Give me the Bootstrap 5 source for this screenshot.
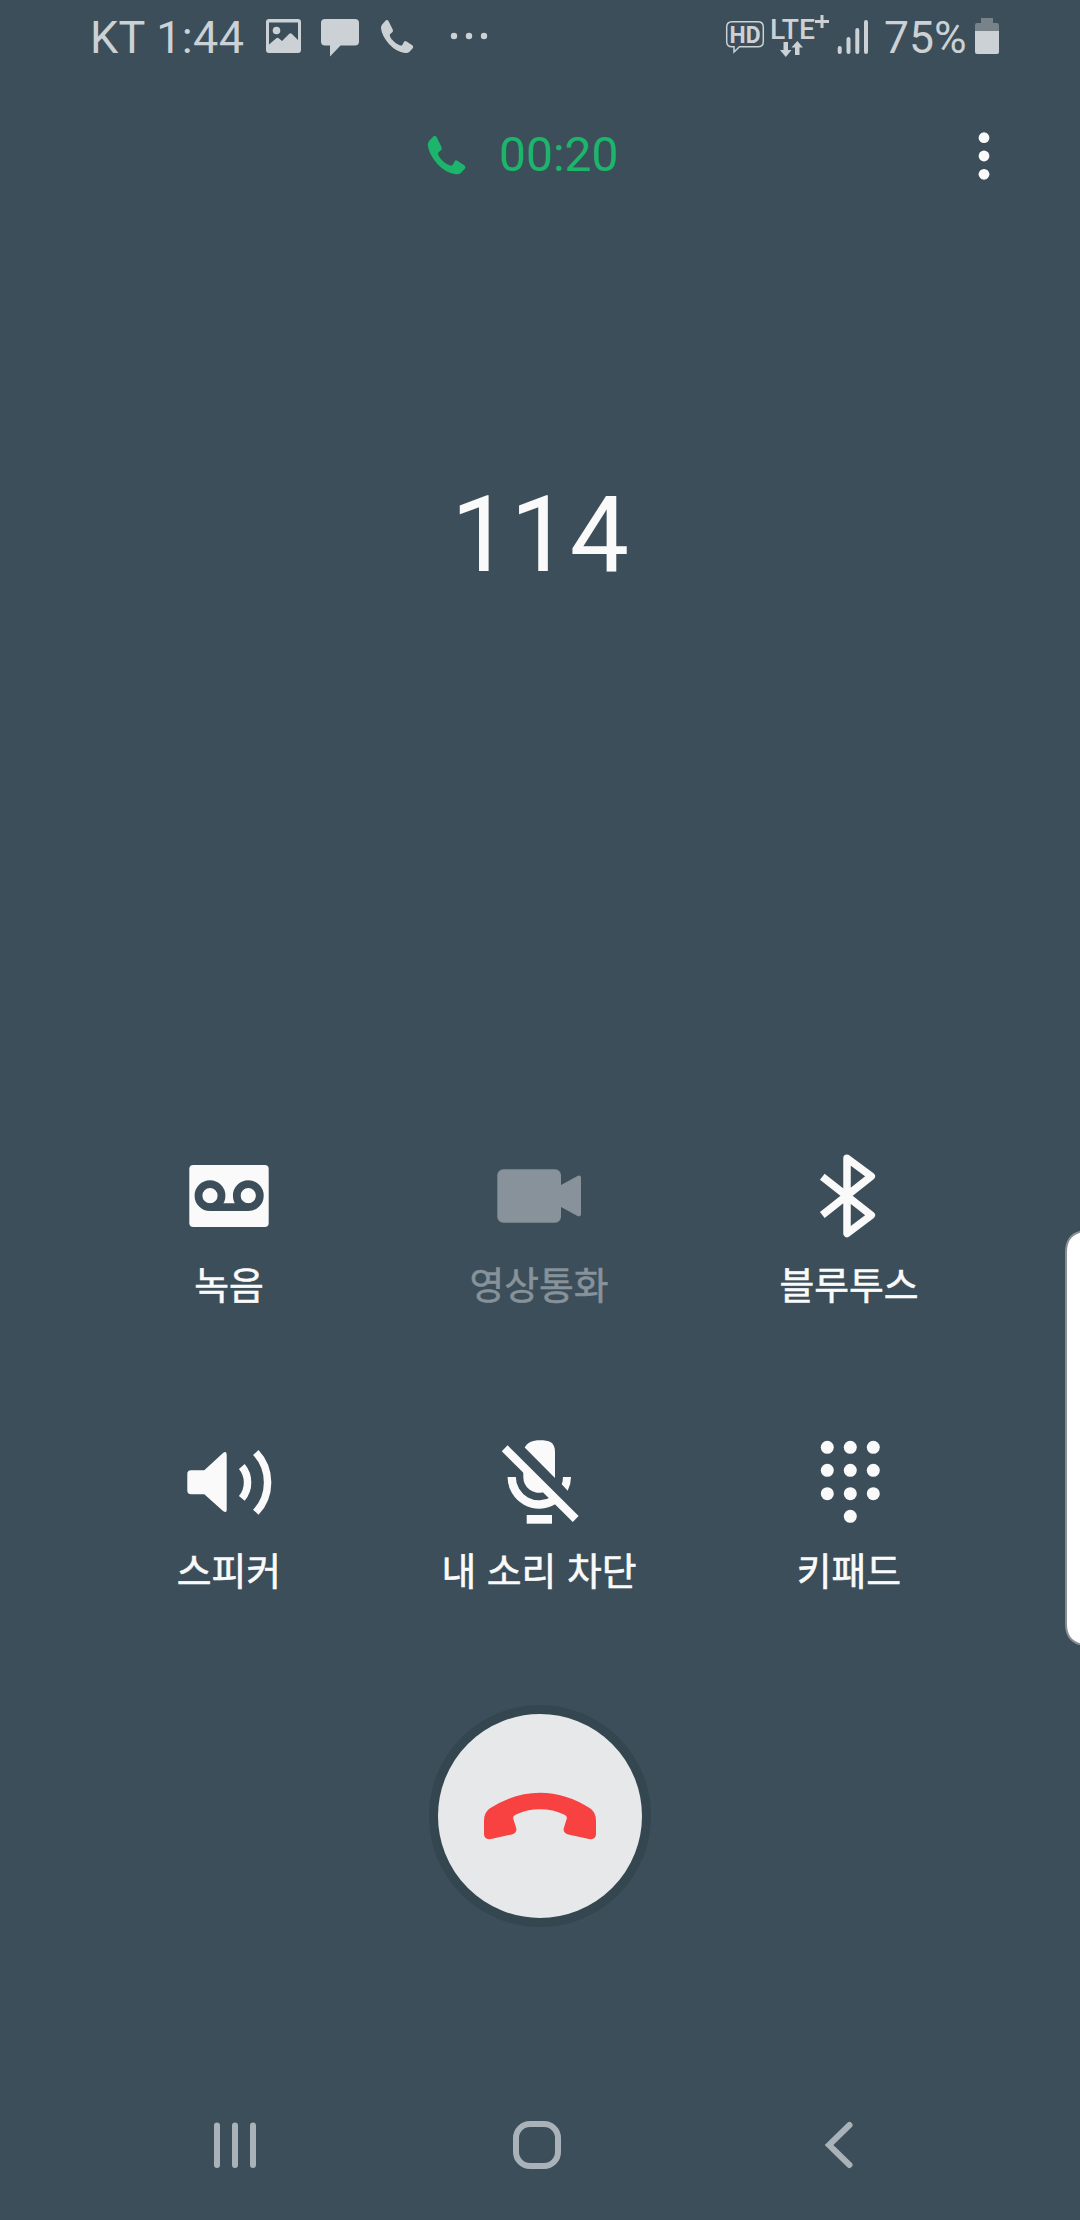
<!DOCTYPE html>
<html lang="ko">
<head>
<meta charset="utf-8">
<meta name="viewport" content="width=device-width, initial-scale=1">
<title>통화</title>
<link href="https://cdn.jsdelivr.net/npm/bootstrap@5.3.0/dist/css/bootstrap.min.css" rel="stylesheet">
<style>
  body { background: #3b4e59; color: #fafafa; font-family: Roboto, "Noto Sans CJK KR", sans-serif; }
  .screen { width: 1080px; height: 2220px; }
  svg { display: block; flex: none; overflow: visible; }
  .status-bar { height: 74px; padding: 0 81px 0 90px; color: #cbd1d4; font-size: 45px; line-height: 76px; }
  .carrier { width: 176px; white-space: pre; letter-spacing: .3px; }
  .percent { width: 93px; padding-left: 2px; font-size: 44.5px; }
  .call-bar { height: 164px; padding-top: 53px; }
  .timer { margin-left: 427px; gap: 32px; color: #1cb56b; font-size: 48px; line-height: 58px; height: 56px; }
  .menu-btn { margin-right: 86px; }
  .caller { height: 907px; padding-top: 235px; font-size: 105.5px; line-height: 124px; }
  .controls { padding: 0 76px 0 74px; }
  .control { height: 286px; }
  .control-name { font-family: "Noto Sans CJK KR", sans-serif; font-size: 37.8px; font-weight: 400; -webkit-text-stroke: .6px currentColor; line-height: 50px; margin-top: 13px; white-space: nowrap; }
  .off { color: #87929a; }
  .end-call { width: 222px; height: 222px; border: 9px solid #34464f; background: #e6e8ea; color: #f74241; margin-top: -12px; }
  .nav-keys { height: 150px; color: #a9b2b8; }
  .edge-panel { left: 1065px; top: 1230px; width: 15px; height: 416px; }
</style>
</head>
<body>
<div class="screen position-relative overflow-hidden d-flex flex-column">
  <header class="status-bar d-flex justify-content-between">
    <div class="d-flex">
      <span class="carrier">KT 1:44</span>
      <svg width="222" height="74" viewBox="266 0 222 74" fill="currentColor">
        <path fill-rule="evenodd" d="M269 19h29q3 0 3 3v28q0 3-3 3h-29q-3 0-3-3V22q0-3 3-3zM269 22.500v22l7-6q1.500-1.500 3 0l3 2.500 7-7q1.500-1.500 3 0l6 6V22.500z"/>
        <circle cx="276.500" cy="30.500" r="3.800"/>
        <path d="M325 19h30q4 0 4 4v18.500q0 4-4 4h-14.500L330 56.500V45.500h-5q-4 0-4-4V23q0-4 4-4z"/>
        <g transform="translate(380.300 19.300) scale(.333)"><path id="handset" d="M17 3Q22 0 25 6L37 30Q40 36 36 39L29 45Q27 50 34 60Q46 74 58 78Q64 80 66 77L71 68Q74 63 79 67L96 78Q101 82 98 86L87 98Q83 102 74 101Q48 98 26 74Q4 48 2 26Q2 20 6 15Z"/></g>
        <circle cx="454" cy="36" r="3.200"/><circle cx="469" cy="36" r="3.200"/><circle cx="484" cy="36" r="3.200"/>
      </svg>
    </div>
    <div class="d-flex">
      <svg width="157" height="74" viewBox="724 0 157 74" fill="currentColor">
        <path d="M731 21.700h26q5.300 0 5.300 5.300v14.500q0 5.300-5.300 5.300h-18.500l-5.500 5.200v-5.200h-2q-5.300 0-5.300-5.300V27q0-5.300 5.300-5.300z" fill="none" stroke="currentColor" stroke-width="1.500"/>
        <text x="728.500" y="42.800" font-size="23.500" font-weight="700" textLength="31" lengthAdjust="spacingAndGlyphs">HD</text>
        <text x="769" y="39" font-size="27" font-weight="500" textLength="45" lengthAdjust="spacingAndGlyphs">LTE</text>
        <path d="M819.500 15h3v5h5.500v3h-5.500v5h-3v-5H814v-3h5.500z"/>
        <path d="M782.500 42h4.500v8h3.500l-5.700 7-5.800-7h3.500zM794 55v-7.500h-3.500l5.800-6.500 5.700 6.500h-3.500V55z"/>
        <path d="M838.700 48v4M847.500 39v13M856.300 30v22M865 22v30" stroke="currentColor" stroke-width="4" stroke-linecap="round"/>
      </svg>
      <span class="percent">75%</span>
      <svg width="24" height="74" viewBox="975 0 24 74">
        <path d="M981 18h12v5h4q2 0 2 2v6h-24v-6q0-2 2-2h4z" fill="#778389"/>
        <path d="M975 31h24v21q0 2-2 2h-20q-2 0-2-2z" fill="currentColor"/>
      </svg>
    </div>
  </header>

  <div class="call-bar d-flex justify-content-between">
    <div class="timer d-flex align-items-center">
      <svg width="40" height="40" viewBox="0 0 103 103" fill="currentColor"><use href="#handset"/></svg>
      <span>00:20</span>
    </div>
    <svg class="menu-btn" width="20" height="56" viewBox="0 0 20 56" fill="currentColor"><circle cx="10" cy="10.700" r="5.400"/><circle cx="10" cy="29" r="5.400"/><circle cx="10" cy="47.300" r="5.400"/></svg>
  </div>

  <div class="caller text-center">114</div>

  <main class="controls">
    <div class="row g-0 row-cols-3">
      <div class="col control d-flex flex-column align-items-center">
        <svg width="100" height="100" fill="currentColor">
          <rect x="10.300" y="20" width="79.400" height="62" rx="4"/>
          <g fill="none" stroke="#3b4e59" stroke-width="7.800"><circle cx="31" cy="50.700" r="11.500"/><circle cx="69.300" cy="50.700" r="11.500"/><path d="M31 62.100H69.300"/></g>
        </svg>
        <span class="control-name">녹음</span>
      </div>
      <div class="col control off d-flex flex-column align-items-center">
        <svg width="100" height="100" fill="currentColor">
          <rect x="8.300" y="24.300" width="63.700" height="53.400" rx="6"/>
          <path d="M72 40L88.500 31Q92 29.500 92 33V69Q92 72.500 88.500 71L72 62Z"/>
        </svg>
        <span class="control-name">영상통화</span>
      </div>
      <div class="col control d-flex flex-column align-items-center">
        <svg width="100" height="100" fill="none" stroke="currentColor" stroke-width="7.500" stroke-linejoin="round">
          <path d="M23.300 31.700L72.300 70.200L48 88.500V13.300L72.300 31.300L23.300 70"/>
        </svg>
        <span class="control-name">블루투스</span>
      </div>
      <div class="col control d-flex flex-column align-items-center">
        <svg width="100" height="100" fill="currentColor">
          <path d="M12 39.300H25.300L44 22Q47.700 19.500 47.700 24V79Q47.700 82.500 44 80L25.300 63.300H12Q8.300 63.300 8.300 59.500V43Q8.300 39.300 12 39.300Z"/>
          <path d="M62.800 35.500A24.800 24.800 0 0 1 62.800 67.300M76.800 21.500A43.800 43.800 0 0 1 76.800 81.300" fill="none" stroke="currentColor" stroke-width="7.500"/>
        </svg>
        <span class="control-name">스피커</span>
      </div>
      <div class="col control d-flex flex-column align-items-center">
        <svg width="100" height="100" fill="currentColor">
          <path d="M35.700 16.500C38.500 11.500 43 9.300 51 9.300C60 9.300 66 11 66 21V47Z"/>
          <path d="M34.300 36V46A15.700 15.700 0 0 0 54 61.300L58 60Z"/>
          <path d="M22.700 46A27.500 27.500 0 0 0 64.800 69.300" fill="none" stroke="currentColor" stroke-width="8.300"/>
          <path d="M74 46H82Q82 53 78.700 59.700L72.700 53.300Q74 50 74 46Z"/>
          <path d="M15.700 17.300L86.700 88" stroke="currentColor" stroke-width="8.300"/>
          <rect x="37.700" y="84" width="25.300" height="8.700"/>
        </svg>
        <span class="control-name">내 소리 차단</span>
      </div>
      <div class="col control d-flex flex-column align-items-center">
        <svg width="100" height="100" fill="currentColor">
          <circle cx="28.300" cy="16.300" r="6.500"/><circle cx="51.300" cy="16.300" r="6.500"/><circle cx="74.300" cy="16.300" r="6.500"/>
          <circle cx="28.300" cy="39.300" r="6.500"/><circle cx="51.300" cy="39.300" r="6.500"/><circle cx="74.300" cy="39.300" r="6.500"/>
          <circle cx="28.300" cy="62.700" r="6.500"/><circle cx="51.300" cy="62.700" r="6.500"/><circle cx="74.300" cy="62.700" r="6.500"/>
          <circle cx="51.300" cy="85.300" r="6.500"/>
        </svg>
        <span class="control-name">키패드</span>
      </div>
    </div>
  </main>

  <button type="button" class="end-call rounded-circle p-0 align-self-center" aria-label="통화 종료">
    <svg width="204" height="204" fill="currentColor"><path d="M52 94.300Q76 78.700 102 78.700Q128 78.700 152 94.300Q158 98 158 107V120Q158 126 151 125L130.300 120.500Q125 119 125.700 114.500L128.800 104.500Q129.500 102 126 100.500Q115 95.300 102 95.300Q89 95.300 78 100.500Q74.500 102 75.200 104.500L78.300 114.500Q79 119 73.700 120.500L53 125Q46 126 46 120V107Q46 98 52 94.300Z"/></svg>
  </button>

  <nav class="nav-keys mt-auto">
    <svg width="1080" height="150" viewBox="0 2070 1080 150" fill="none" stroke="currentColor" stroke-width="6" stroke-linecap="round">
      <path d="M217 2125.500V2165M235 2125.500V2165M253 2125.500V2165"/>
      <rect x="516" y="2124" width="42" height="42" rx="14"/>
      <path d="M849.500 2125L829 2145L849.500 2165"/>
    </svg>
  </nav>

  <svg class="edge-panel position-absolute" viewBox="0 0 15 416"><path d="M18 1Q1 4 1 22V394Q1 412 18 415Z" fill="#fff" stroke="#8a8e90" stroke-width="2"/></svg>
</div>
<script src="https://cdn.jsdelivr.net/npm/bootstrap@5.3.0/dist/js/bootstrap.bundle.min.js"></script>
</body>
</html>
